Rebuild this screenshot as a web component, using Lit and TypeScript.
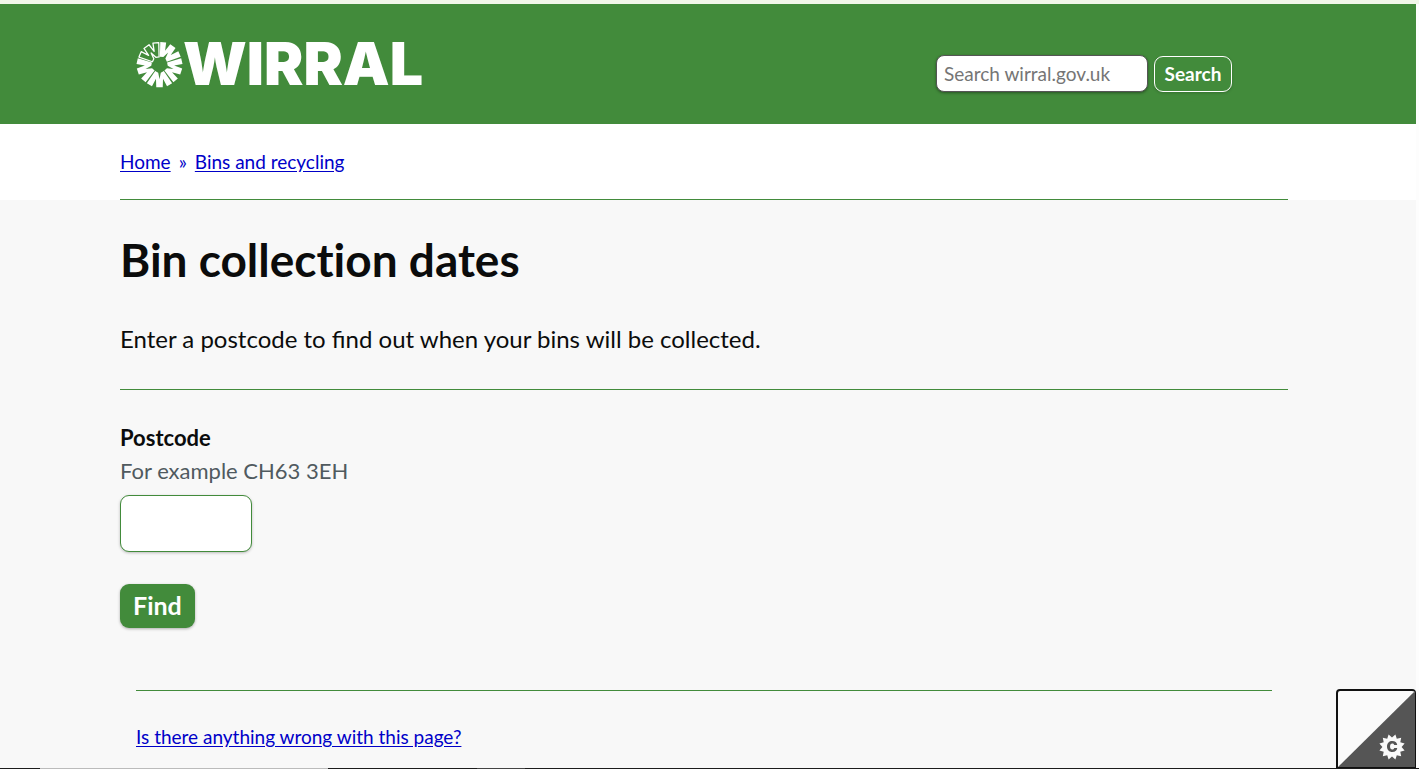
import { LitElement, html, css, svg } from 'lit';
import { customElement, state } from 'lit/decorators.js';

// One segment of the emblem ring as [degrees, radius] pairs
const SEGMENT: [number, number][] = [
    [-34, 23], [-19, 23.5], [-14, 15], [-8, 23.5], [8, 23.5], [14, 15], [19, 23.5], [34, 23],
    [33, 8], [9, 8.5], [0, 15], [-9, 8.5], [-33, 8]
];

@customElement('wirral-logo')
class WirralLogo extends LitElement {
    static styles = css`
        :host {
            display: block;
        }

        .logo {
            display: flex;
            align-items: center;
            color: #fff;
            text-decoration: none;
        }

        .emblem {
            width: 47px;
            height: 47px;
            flex: none;
        }

        .wordmark {
            font-family: Inter, 'Liberation Sans', sans-serif;
            font-size: 59px;
            font-weight: 900;
            line-height: 48px;
        }
    `;

    getSegmentPoints(scale = 1) {
        return SEGMENT.map(([deg, r]) => {
            const a = (deg * Math.PI) / 180;
            return `${(r * scale * Math.sin(a)).toFixed(1)},${(-r * scale * Math.cos(a)).toFixed(1)}`;
        }).join(' ');
    }

    render() {
        return html`
            <a class="logo" href="#" aria-label="Wirral home">
                <svg class="emblem" viewBox="-24 -24 48 48" aria-hidden="true">
                    ${[36, 108, 180, 252].map(angle => svg`
                        <polygon points=${this.getSegmentPoints()} transform="rotate(${angle})" fill="#fff" />
                    `)}
                    <polygon points=${this.getSegmentPoints(0.97)} transform="rotate(-36)" fill="none" stroke="#fff" stroke-width="1.3" stroke-linejoin="round" />
                </svg>
                <span class="wordmark">WIRRAL</span>
            </a>
        `;
    }
}

@customElement('contrast-toggle')
class ContrastToggle extends LitElement {
    static styles = css`
        :host {
            display: block;
        }

        .toggle {
            display: block;
            width: 80px;
            height: 80px;
            padding: 0;
            border: 2px solid #111;
            border-right-width: 1px;
            border-radius: 4px 4px 0 0;
            background: #fafafa;
            cursor: pointer;
            overflow: hidden;
        }

        .art {
            display: block;
            width: 100%;
            height: 100%;
        }

        .mark {
            font: 900 15px Inter, sans-serif;
        }
    `;

    // Twelve pointed cog
    getCogPoints() {
        const points: string[] = [];
        for (let i = 0; i < 24; i++) {
            const radius = i % 2 ? 13 : 9.6;
            const a = (i * Math.PI) / 12;
            points.push(`${(54 + radius * Math.sin(a)).toFixed(1)},${(56 - radius * Math.cos(a)).toFixed(1)}`);
        }
        return points.join(' ');
    }

    render() {
        return html`
            <button class="toggle" type="button" aria-label="Contrast and cookie settings">
                <svg class="art" viewBox="0 0 77 76" preserveAspectRatio="none" aria-hidden="true">
                    <path d="M77 0 V76 H0 Z" fill="#555" />
                    <polygon points=${this.getCogPoints()} fill="#fafafa" />
                    <text class="mark" x="54" y="61" text-anchor="middle" fill="#555">C</text>
                </svg>
            </button>
        `;
    }
}

@customElement('app-root')
class AppRoot extends LitElement {
    @state() private postcode = '';

    static styles = css`
        :host {
            display: flex;
            flex-direction: column;
            min-height: 100vh;
            box-sizing: border-box;
            padding-right: 3px;
            border-top: 4px solid #f1f6e8;
            background: #fdfdfd;
            color: #0b0c0c;
            font-family: Lato, 'Liberation Sans', sans-serif;
            font-size: 19px;
            line-height: 28px;
        }

        * {
            box-sizing: border-box;
        }

        a {
            color: #0000c8;
            text-underline-offset: 2px;
        }

        .wrap {
            margin: 0 128px 0 120px;
        }

        /* Header */
        .header {
            background: #428b3b;
        }

        .header-row {
            display: flex;
            justify-content: space-between;
            align-items: center;
            height: 120px;
            padding: 0 56px 0 16px;
        }

        .search {
            display: flex;
            align-items: flex-end;
            gap: 6px;
            padding-top: 19px;
        }

        .search-input {
            width: 212px;
            height: 37px;
            padding: 0 7px 1px;
            border: 1px solid #555;
            border-radius: 8px;
            background: #fff;
            box-shadow: 0 1px 3px rgba(0, 0, 0, 0.4);
            font: inherit;
        }

        .search-input::placeholder {
            color: #757575;
        }

        .search-button {
            min-width: 78px;
            height: 36px;
            padding: 0 9px;
            border: 1px solid #fff;
            border-radius: 9px;
            background: #428b3b;
            box-shadow: 0 1px 3px rgba(0, 0, 0, 0.2);
            color: #fff;
            font: inherit;
            font-weight: 700;
        }

        /* Breadcrumb */
        .breadcrumb-bar {
            background: #fff;
        }

        .breadcrumb {
            display: flex;
            gap: 8px;
            padding: 24px 0 23px;
            border-bottom: 1px solid #428b3b;
            color: #0000c8;
        }

        /* Main */
        .main {
            flex: 1;
            background: #f8f8f8;
        }

        .title {
            margin: 0;
            padding: 32px 0 35px;
            font-size: 46px;
            font-weight: 700;
            font-variant-ligatures: none;
            line-height: 56px;
        }

        .intro {
            margin: 0;
            padding-bottom: 34px;
            border-bottom: 1px solid #428b3b;
            font-size: 24px;
            line-height: 32px;
        }

        .form {
            display: flex;
            flex-direction: column;
            align-items: flex-start;
            padding: 32px 0 62px;
        }

        .label {
            font-size: 22px;
            font-weight: 700;
            line-height: 32px;
        }

        .hint {
            color: #505a5f;
            font-size: 22px;
            line-height: 34px;
        }

        .postcode {
            width: 132px;
            height: 57px;
            margin: 7px 0 32px;
            padding: 0 12px;
            border: 1px solid #428b3b;
            border-radius: 9px;
            background: #fff;
            box-shadow: 0 1px 3px rgba(0, 0, 0, 0.25);
            font: inherit;
            font-size: 24px;
        }

        .find {
            height: 44px;
            padding: 0 13px 2px;
            border: 0;
            border-radius: 9px;
            background: #428b3b;
            box-shadow: 0 1px 3px rgba(0, 0, 0, 0.3);
            color: #fff;
            font: inherit;
            font-size: 25px;
            font-weight: 700;
        }

        .feedback {
            margin: 0 16px;
            padding-top: 32px;
            border-top: 1px solid #428b3b;
        }

        /* Pinned to the window */
        .contrast {
            position: fixed;
            right: 3px;
            bottom: 0;
        }

        .window-edge {
            position: fixed;
            left: 0;
            right: 0;
            bottom: 0;
            height: 1px;
            background: linear-gradient(90deg, #1c1c1c 40px, #bbb 40px 328px, #1c1c1c 328px 477px, #444 477px 525px, #1c1c1c 525px);
        }
    `;

    render() {
        return html`
            <header class="header">
                <div class="wrap header-row">
                    <wirral-logo></wirral-logo>
                    <form class="search" role="search" @submit=${this.handleSubmit}>
                        <input class="search-input" type="text" aria-label="Search wirral.gov.uk" placeholder="Search wirral.gov.uk">
                        <button class="search-button" type="submit">Search</button>
                    </form>
                </div>
            </header>

            <div class="breadcrumb-bar">
                <nav class="wrap breadcrumb" aria-label="Breadcrumb">
                    <a href="#">Home</a>
                    <span>»</span>
                    <a href="#">Bins and recycling</a>
                </nav>
            </div>

            <main class="main">
                <div class="wrap">
                    <h1 class="title">Bin collection dates</h1>
                    <p class="intro">Enter a postcode to find out when your bins will be collected.</p>
                    <form class="form" @submit=${this.handleSubmit}>
                        <label class="label" for="postcode">Postcode</label>
                        <span class="hint" id="postcode-hint">For example CH63 3EH</span>
                        <input
                            class="postcode"
                            id="postcode"
                            type="text"
                            aria-describedby="postcode-hint"
                            .value=${this.postcode}
                            @input=${e => this.postcode = e.target.value}
                        >
                        <button class="find" type="submit">Find</button>
                    </form>
                    <div class="feedback">
                        <a href="#">Is there anything wrong with this page?</a>
                    </div>
                </div>
            </main>

            <contrast-toggle class="contrast"></contrast-toggle>
            <div class="window-edge"></div>
        `;
    }

    handleSubmit(e: Event) {
        e.preventDefault();
    }
}
